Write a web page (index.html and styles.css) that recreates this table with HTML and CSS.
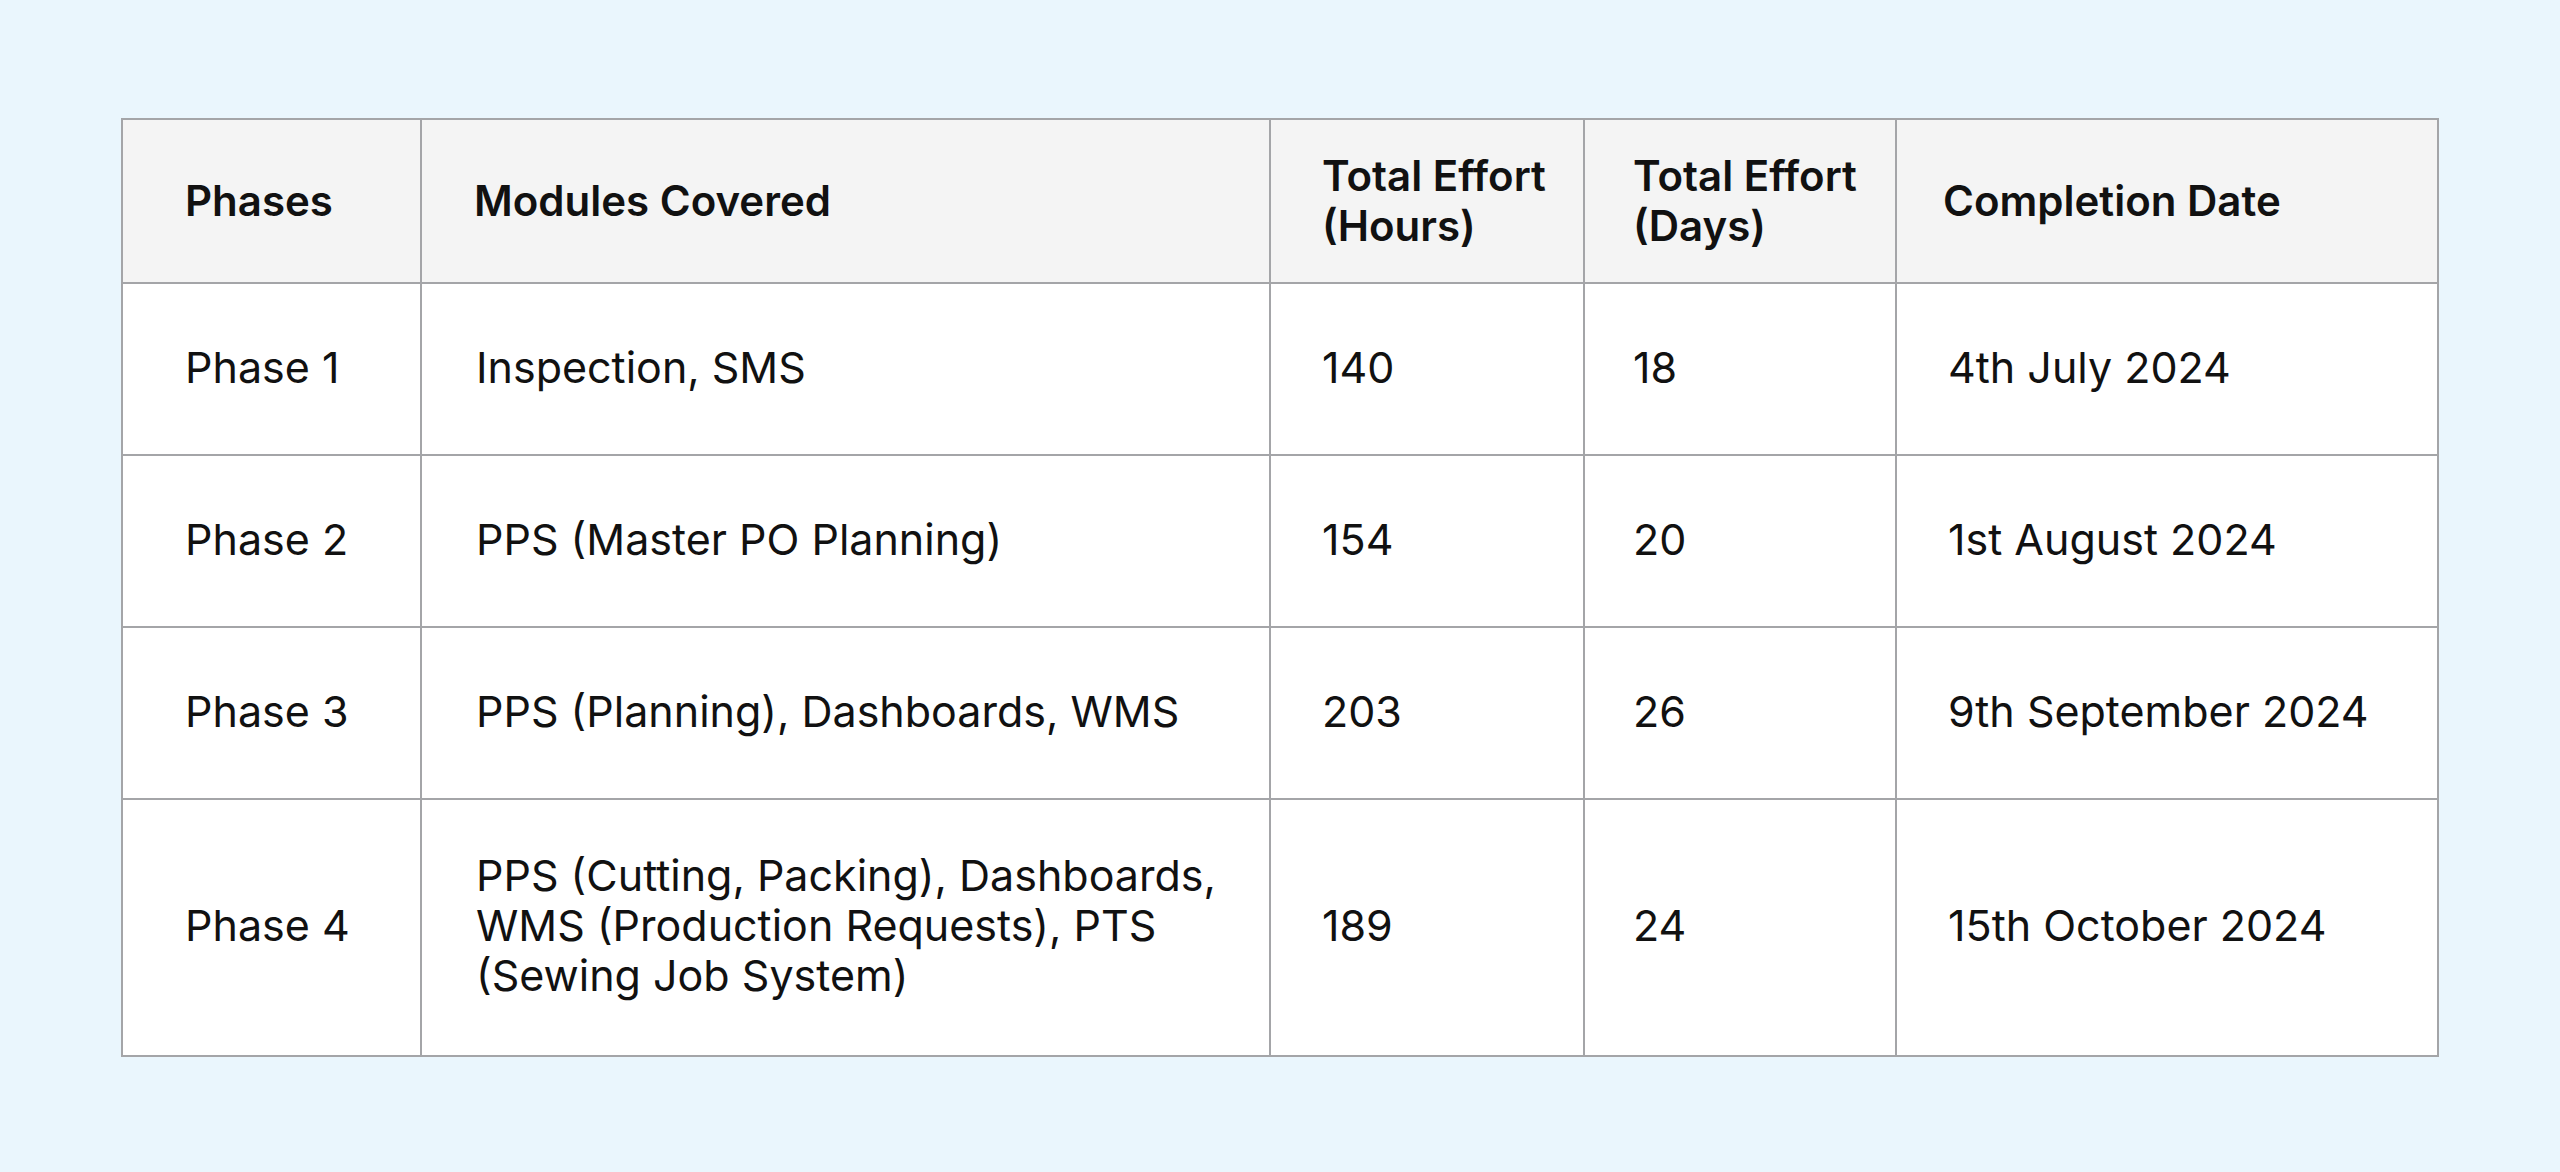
FILE: index.html
```html
<!DOCTYPE html>
<html lang="en">
<head>
<meta charset="utf-8">
<title>Phases</title>
<link rel="stylesheet" href="styles.css">
</head>
<body>
<div class="page">
  <table class="plan">
    <colgroup>
      <col class="c1"><col class="c2"><col class="c3"><col class="c4"><col class="c5">
    </colgroup>
    <thead>
      <tr>
        <th class="p1">Phases</th>
        <th class="p2">Modules Covered</th>
        <th class="p3">Total Effort<br>(Hours)</th>
        <th class="p4">Total Effort<br>(Days)</th>
        <th class="p5">Completion Date</th>
      </tr>
    </thead>
    <tbody>
      <tr>
        <td class="p1">Phase 1</td>
        <td class="p2">Inspection, SMS</td>
        <td class="p3">140</td>
        <td class="p4">18</td>
        <td class="p5">4th July 2024</td>
      </tr>
      <tr>
        <td class="p1">Phase 2</td>
        <td class="p2">PPS (Master PO Planning)</td>
        <td class="p3">154</td>
        <td class="p4">20</td>
        <td class="p5">1st August 2024</td>
      </tr>
      <tr>
        <td class="p1">Phase 3</td>
        <td class="p2">PPS (Planning), Dashboards, WMS</td>
        <td class="p3">203</td>
        <td class="p4">26</td>
        <td class="p5">9th September 2024</td>
      </tr>
      <tr class="tall">
        <td class="p1">Phase 4</td>
        <td class="p2">PPS (Cutting, Packing), Dashboards,<br>WMS (Production Requests), PTS<br>(Sewing Job System)</td>
        <td class="p3">189</td>
        <td class="p4">24</td>
        <td class="p5">15th October 2024</td>
      </tr>
    </tbody>
  </table>
</div>
</body>
</html>
```

FILE: styles.css
```css
html, body {
  margin: 0;
  padding: 0;
  background: #eaf6fd;
}
body {
  font-family: Inter, "Noto Sans", "Liberation Sans", sans-serif;
  color: #111111;
}
.page {
  padding: 118px 0 0 121px;
}
.plan {
  border-collapse: collapse;
  table-layout: fixed;
  width: 2316px;
  background: #ffffff;
  font-size: 43px;
  line-height: 50px;
}
.c1 { width: 299px; }
.c2 { width: 849px; }
.c3 { width: 314px; }
.c4 { width: 312px; }
.c5 { width: 542px; }

.plan th, .plan td {
  border: 2px solid #a4a5a8;
  text-align: left;
  vertical-align: middle;
  padding: 0;
}
.plan th {
  background: #f4f4f4;
  font-weight: 600;
  font-size: 42px;
  line-height: 50px;
  height: 162px;
}
.plan td {
  font-weight: 400;
  height: 165px;
  padding-bottom: 5px;
}
.plan tr.tall td {
  height: 250px;
}
.plan .p1 { padding-left: 62px; }
.plan .p2 { padding-left: 52px; }
.plan td.p2 { padding-left: 54px; }
.plan .p3 { padding-left: 51px; }
.plan .p4 { padding-left: 48px; }
.plan .p5 { padding-left: 46px; }
.plan td.p5 { padding-left: 51px; }
```
